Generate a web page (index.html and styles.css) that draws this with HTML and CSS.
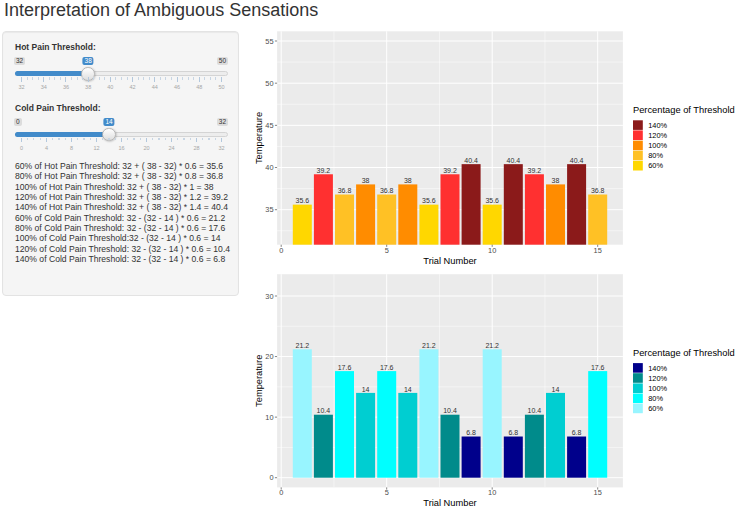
FILE: index.html
```html
<!DOCTYPE html>
<html lang="en">
<head>
<meta charset="utf-8">
<title>Interpretation of Ambiguous Sensations</title>
<link rel="stylesheet" href="styles.css">
</head>
<body>
<h1 class="page-title">Interpretation of Ambiguous Sensations</h1>
<div class="layout">
  <aside class="well">
    <div class="slider-group">
      <label class="control-label">Hot Pain Threshold:</label>
      <div class="irs">
        <span class="irs-line"></span>
        <span class="irs-min">32</span>
        <span class="irs-max">50</span>
        <div class="irs-range">
          <span class="irs-bar" style="width: calc(33.333% + 6.5px)"></span>
          <span class="irs-single" style="left: 33.333%">38</span>
          <span class="irs-handle" style="left: 33.333%"></span>
          <div class="irs-grid irs-grid-hot">
            <span class="grid-minor"></span>
            <div class="grid-ticks">
              <span class="tick"><span class="tick-text">32</span></span>
              <span class="tick"><span class="tick-text">34</span></span>
              <span class="tick"><span class="tick-text">36</span></span>
              <span class="tick"><span class="tick-text">38</span></span>
              <span class="tick"><span class="tick-text">40</span></span>
              <span class="tick"><span class="tick-text">42</span></span>
              <span class="tick"><span class="tick-text">44</span></span>
              <span class="tick"><span class="tick-text">46</span></span>
              <span class="tick"><span class="tick-text">48</span></span>
              <span class="tick"><span class="tick-text">50</span></span>
            </div>
          </div>
        </div>
      </div>
    </div>
    <div class="slider-group">
      <label class="control-label">Cold Pain Threshold:</label>
      <div class="irs">
        <span class="irs-line"></span>
        <span class="irs-min">0</span>
        <span class="irs-max">32</span>
        <div class="irs-range">
          <span class="irs-bar" style="width: calc(43.75% + 6.5px)"></span>
          <span class="irs-single" style="left: 43.75%">14</span>
          <span class="irs-handle" style="left: 43.75%"></span>
          <div class="irs-grid irs-grid-cold">
            <span class="grid-minor"></span>
            <div class="grid-ticks">
              <span class="tick"><span class="tick-text">0</span></span>
              <span class="tick"><span class="tick-text">4</span></span>
              <span class="tick"><span class="tick-text">8</span></span>
              <span class="tick"><span class="tick-text">12</span></span>
              <span class="tick"><span class="tick-text">16</span></span>
              <span class="tick"><span class="tick-text">20</span></span>
              <span class="tick"><span class="tick-text">24</span></span>
              <span class="tick"><span class="tick-text">28</span></span>
              <span class="tick"><span class="tick-text">32</span></span>
            </div>
          </div>
        </div>
      </div>
    </div>
    <div class="formulas">
      <div>60% of Hot Pain Threshold: 32 + ( 38 - 32) * 0.6 = 35.6</div>
      <div>80% of Hot Pain Threshold: 32 + ( 38 - 32) * 0.8 = 36.8</div>
      <div>100% of Hot Pain Threshold: 32 + ( 38 - 32) * 1 = 38</div>
      <div>120% of Hot Pain Threshold: 32 + ( 38 - 32) * 1.2 = 39.2</div>
      <div>140% of Hot Pain Threshold: 32 + ( 38 - 32) * 1.4 = 40.4</div>
      <div>60% of Cold Pain Threshold: 32 - (32 - 14 ) * 0.6 = 21.2</div>
      <div>80% of Cold Pain Threshold: 32 - (32 - 14 ) * 0.6 = 17.6</div>
      <div>100% of Cold Pain Threshold:32 - (32 - 14 ) * 0.6 = 14</div>
      <div>120% of Cold Pain Threshold: 32 - (32 - 14 ) * 0.6 = 10.4</div>
      <div>140% of Cold Pain Threshold: 32 - (32 - 14 ) * 0.6 = 6.8</div>
    </div>
  </aside>

  <main class="plots">
    <!-- Hot thresholds per trial -->
    <svg class="plot" width="493" height="240" viewBox="245 28 493 240">
      <rect class="panel" x="277.1" y="31.3" width="345.8" height="213.4"/>
      <g class="grid-minor-lines">
        <line x1="277.1" x2="622.9" y1="230.79" y2="230.79"/>
        <line x1="277.1" x2="622.9" y1="188.61" y2="188.61"/>
        <line x1="277.1" x2="622.9" y1="146.44" y2="146.44"/>
        <line x1="277.1" x2="622.9" y1="104.26" y2="104.26"/>
        <line x1="277.1" x2="622.9" y1="62.09" y2="62.09"/>
        <line x1="333.95" x2="333.95" y1="31.3" y2="244.7"/>
        <line x1="439.45" x2="439.45" y1="31.3" y2="244.7"/>
        <line x1="544.95" x2="544.95" y1="31.3" y2="244.7"/>
      </g>
      <g class="grid-major-lines">
        <line x1="277.1" x2="622.9" y1="209.7" y2="209.7"/>
        <line x1="277.1" x2="622.9" y1="167.53" y2="167.53"/>
        <line x1="277.1" x2="622.9" y1="125.35" y2="125.35"/>
        <line x1="277.1" x2="622.9" y1="83.18" y2="83.18"/>
        <line x1="277.1" x2="622.9" y1="41" y2="41"/>
        <line x1="281.2" x2="281.2" y1="31.3" y2="244.7"/>
        <line x1="386.7" x2="386.7" y1="31.3" y2="244.7"/>
        <line x1="492.2" x2="492.2" y1="31.3" y2="244.7"/>
        <line x1="597.7" x2="597.7" y1="31.3" y2="244.7"/>
      </g>
      <g class="bars">
        <rect fill="#FFD700" x="292.8" y="204.64" width="19" height="40.06"/>
        <rect fill="#FF3030" x="313.9" y="174.27" width="19" height="70.43"/>
        <rect fill="#FFC125" x="335.0" y="194.52" width="19" height="50.18"/>
        <rect fill="#FF8C00" x="356.1" y="184.4" width="19" height="60.3"/>
        <rect fill="#FFC125" x="377.2" y="194.52" width="19" height="50.18"/>
        <rect fill="#FF8C00" x="398.3" y="184.4" width="19" height="60.3"/>
        <rect fill="#FFD700" x="419.4" y="204.64" width="19" height="40.06"/>
        <rect fill="#FF3030" x="440.5" y="174.27" width="19" height="70.43"/>
        <rect fill="#8B1A1A" x="461.6" y="164.15" width="19" height="80.55"/>
        <rect fill="#FFD700" x="482.7" y="204.64" width="19" height="40.06"/>
        <rect fill="#8B1A1A" x="503.8" y="164.15" width="19" height="80.55"/>
        <rect fill="#FF3030" x="524.9" y="174.27" width="19" height="70.43"/>
        <rect fill="#FF8C00" x="546.0" y="184.4" width="19" height="60.3"/>
        <rect fill="#8B1A1A" x="567.1" y="164.15" width="19" height="80.55"/>
        <rect fill="#FFC125" x="588.2" y="194.52" width="19" height="50.18"/>
      </g>
      <g class="bar-labels">
        <text x="302.3" y="203.3">35.6</text>
        <text x="323.4" y="172.9">39.2</text>
        <text x="344.5" y="193.2">36.8</text>
        <text x="365.6" y="183.1">38</text>
        <text x="386.7" y="193.2">36.8</text>
        <text x="407.8" y="183.1">38</text>
        <text x="428.9" y="203.3">35.6</text>
        <text x="450.0" y="172.9">39.2</text>
        <text x="471.1" y="162.8">40.4</text>
        <text x="492.2" y="203.3">35.6</text>
        <text x="513.3" y="162.8">40.4</text>
        <text x="534.4" y="172.9">39.2</text>
        <text x="555.5" y="183.1">38</text>
        <text x="576.6" y="162.8">40.4</text>
        <text x="597.7" y="193.2">36.8</text>
      </g>
      <g class="ticks">
        <line x1="274.9" x2="277.1" y1="209.7" y2="209.7"/>
        <line x1="274.9" x2="277.1" y1="167.53" y2="167.53"/>
        <line x1="274.9" x2="277.1" y1="125.35" y2="125.35"/>
        <line x1="274.9" x2="277.1" y1="83.18" y2="83.18"/>
        <line x1="274.9" x2="277.1" y1="41" y2="41"/>
        <line x1="281.2" x2="281.2" y1="244.7" y2="246.9"/>
        <line x1="386.7" x2="386.7" y1="244.7" y2="246.9"/>
        <line x1="492.2" x2="492.2" y1="244.7" y2="246.9"/>
        <line x1="597.7" x2="597.7" y1="244.7" y2="246.9"/>
      </g>
      <g class="axis-y-text">
        <text x="273.6" y="212.3">35</text>
        <text x="273.6" y="170.1">40</text>
        <text x="273.6" y="128">45</text>
        <text x="273.6" y="85.8">50</text>
        <text x="273.6" y="43.6">55</text>
      </g>
      <g class="axis-x-text">
        <text x="281.2" y="252.7">0</text>
        <text x="386.7" y="252.7">5</text>
        <text x="492.2" y="252.7">10</text>
        <text x="597.7" y="252.7">15</text>
      </g>
      <text class="axis-title" x="450" y="263.5">Trial Number</text>
      <text class="axis-title" transform="translate(261.8 138) rotate(-90)">Temperature</text>
      <g class="legend">
        <text class="legend-title" x="633" y="112.7">Percentage of Threshold</text>
        <rect fill="#8B1A1A" x="633" y="120.3" width="9.8" height="9.6"/>
        <rect fill="#FF3030" x="633" y="130.4" width="9.8" height="9.6"/>
        <rect fill="#FF8C00" x="633" y="140.6" width="9.8" height="9.6"/>
        <rect fill="#FFC125" x="633" y="150.7" width="9.8" height="9.6"/>
        <rect fill="#FFD700" x="633" y="160.9" width="9.8" height="9.6"/>
        <text x="648.2" y="127.7">140%</text>
        <text x="648.2" y="137.8">120%</text>
        <text x="648.2" y="148">100%</text>
        <text x="648.2" y="158.1">80%</text>
        <text x="648.2" y="168.2">60%</text>
      </g>
    </svg>

    <!-- Cold thresholds per trial -->
    <svg class="plot" width="493" height="241" viewBox="245 268 493 241">
      <rect class="panel" x="277.1" y="274.2" width="345.8" height="213.2"/>
      <g class="grid-minor-lines">
        <line x1="277.1" x2="622.9" y1="447.42" y2="447.42"/>
        <line x1="277.1" x2="622.9" y1="386.85" y2="386.85"/>
        <line x1="277.1" x2="622.9" y1="326.28" y2="326.28"/>
        <line x1="333.95" x2="333.95" y1="274.2" y2="487.4"/>
        <line x1="439.45" x2="439.45" y1="274.2" y2="487.4"/>
        <line x1="544.95" x2="544.95" y1="274.2" y2="487.4"/>
      </g>
      <g class="grid-major-lines">
        <line x1="277.1" x2="622.9" y1="477.7" y2="477.7"/>
        <line x1="277.1" x2="622.9" y1="417.13" y2="417.13"/>
        <line x1="277.1" x2="622.9" y1="356.56" y2="356.56"/>
        <line x1="277.1" x2="622.9" y1="295.99" y2="295.99"/>
        <line x1="281.2" x2="281.2" y1="274.2" y2="487.4"/>
        <line x1="386.7" x2="386.7" y1="274.2" y2="487.4"/>
        <line x1="492.2" x2="492.2" y1="274.2" y2="487.4"/>
        <line x1="597.7" x2="597.7" y1="274.2" y2="487.4"/>
      </g>
      <g class="bars">
        <rect fill="#98F5FF" x="292.8" y="349.29" width="19" height="128.41"/>
        <rect fill="#008B8B" x="313.9" y="414.71" width="19" height="62.99"/>
        <rect fill="#00FFFF" x="335.0" y="371.1" width="19" height="106.6"/>
        <rect fill="#00CED1" x="356.1" y="392.9" width="19" height="84.8"/>
        <rect fill="#00FFFF" x="377.2" y="371.1" width="19" height="106.6"/>
        <rect fill="#00CED1" x="398.3" y="392.9" width="19" height="84.8"/>
        <rect fill="#98F5FF" x="419.4" y="349.29" width="19" height="128.41"/>
        <rect fill="#008B8B" x="440.5" y="414.71" width="19" height="62.99"/>
        <rect fill="#00008B" x="461.6" y="436.51" width="19" height="41.19"/>
        <rect fill="#98F5FF" x="482.7" y="349.29" width="19" height="128.41"/>
        <rect fill="#00008B" x="503.8" y="436.51" width="19" height="41.19"/>
        <rect fill="#008B8B" x="524.9" y="414.71" width="19" height="62.99"/>
        <rect fill="#00CED1" x="546.0" y="392.9" width="19" height="84.8"/>
        <rect fill="#00008B" x="567.1" y="436.51" width="19" height="41.19"/>
        <rect fill="#00FFFF" x="588.2" y="371.1" width="19" height="106.6"/>
      </g>
      <g class="bar-labels">
        <text x="302.3" y="348">21.2</text>
        <text x="323.4" y="413.4">10.4</text>
        <text x="344.5" y="369.8">17.6</text>
        <text x="365.6" y="391.6">14</text>
        <text x="386.7" y="369.8">17.6</text>
        <text x="407.8" y="391.6">14</text>
        <text x="428.9" y="348">21.2</text>
        <text x="450.0" y="413.4">10.4</text>
        <text x="471.1" y="435.2">6.8</text>
        <text x="492.2" y="348">21.2</text>
        <text x="513.3" y="435.2">6.8</text>
        <text x="534.4" y="413.4">10.4</text>
        <text x="555.5" y="391.6">14</text>
        <text x="576.6" y="435.2">6.8</text>
        <text x="597.7" y="369.8">17.6</text>
      </g>
      <g class="ticks">
        <line x1="274.9" x2="277.1" y1="477.7" y2="477.7"/>
        <line x1="274.9" x2="277.1" y1="417.13" y2="417.13"/>
        <line x1="274.9" x2="277.1" y1="356.56" y2="356.56"/>
        <line x1="274.9" x2="277.1" y1="295.99" y2="295.99"/>
        <line x1="281.2" x2="281.2" y1="487.4" y2="489.6"/>
        <line x1="386.7" x2="386.7" y1="487.4" y2="489.6"/>
        <line x1="492.2" x2="492.2" y1="487.4" y2="489.6"/>
        <line x1="597.7" x2="597.7" y1="487.4" y2="489.6"/>
      </g>
      <g class="axis-y-text">
        <text x="273.6" y="480.3">0</text>
        <text x="273.6" y="419.7">10</text>
        <text x="273.6" y="359.2">20</text>
        <text x="273.6" y="298.6">30</text>
      </g>
      <g class="axis-x-text">
        <text x="281.2" y="495.4">0</text>
        <text x="386.7" y="495.4">5</text>
        <text x="492.2" y="495.4">10</text>
        <text x="597.7" y="495.4">15</text>
      </g>
      <text class="axis-title" x="450" y="506.3">Trial Number</text>
      <text class="axis-title" transform="translate(261.8 380.8) rotate(-90)">Temperature</text>
      <g class="legend">
        <text class="legend-title" x="633" y="355.5">Percentage of Threshold</text>
        <rect fill="#00008B" x="633" y="363.1" width="9.8" height="9.6"/>
        <rect fill="#008B8B" x="633" y="373.2" width="9.8" height="9.6"/>
        <rect fill="#00CED1" x="633" y="383.4" width="9.8" height="9.6"/>
        <rect fill="#00FFFF" x="633" y="393.5" width="9.8" height="9.6"/>
        <rect fill="#98F5FF" x="633" y="403.6" width="9.8" height="9.6"/>
        <text x="648.2" y="370.5">140%</text>
        <text x="648.2" y="380.6">120%</text>
        <text x="648.2" y="390.8">100%</text>
        <text x="648.2" y="400.9">80%</text>
        <text x="648.2" y="411">60%</text>
      </g>
    </svg>
  </main>
</div>
</body>
</html>
```

FILE: styles.css
```css
html, body {
  margin: 0;
  padding: 0;
  background: #ffffff;
}

body {
  font-family: "Liberation Sans", Arial, Helvetica, sans-serif;
  color: #333333;
  width: 738px;
  height: 509px;
  overflow: hidden;
}

.page-title {
  margin: 0 0 8px 0;
  padding-left: 4px;
  font-size: 18px;
  line-height: 20px;
  font-weight: normal;
  color: #333333;
}

.layout {
  display: flex;
  align-items: flex-start;
}

/* Sidebar well */
.well {
  box-sizing: border-box;
  width: 237px;
  margin: 3px 0 0 2px;
  padding: 10.3px 10px 30.5px 12px;
  background: #f5f5f5;
  border: 1px solid #e3e3e3;
  border-radius: 4px;
  box-shadow: inset 0 1px 1px rgba(0, 0, 0, 0.05);
}

.slider-group + .slider-group {
  margin-top: 11.9px;
}

.control-label {
  display: block;
  font-size: 8.5px;
  line-height: 10px;
  font-weight: bold;
  color: #333333;
  margin-bottom: 5px;
}

/* Range slider */
.irs {
  position: relative;
  width: 213px;
  height: 33.5px;
}

.irs-line {
  position: absolute;
  left: 0;
  right: 0;
  top: 14.2px;
  height: 5px;
  box-sizing: border-box;
  background: #ededed;
  border: 1px solid #d4d4d4;
  border-radius: 3px;
}

.irs-min,
.irs-max,
.irs-single {
  position: absolute;
  top: 0;
  height: 8px;
  padding: 0 2px;
  font-size: 6.5px;
  line-height: 8px;
  border-radius: 2px;
  white-space: nowrap;
}

.irs-min,
.irs-max {
  background: rgba(0, 0, 0, 0.1);
  color: #333333;
}

.irs-min { left: -1px; }
.irs-max { right: 0; }

.irs-range {
  position: absolute;
  top: 0;
  bottom: 0;
  left: 6.5px;
  right: 6.5px;
}

.irs-bar {
  position: absolute;
  left: -6.5px;
  top: 14.2px;
  height: 5px;
  background: #428bca;
  border-radius: 3px 0 0 3px;
}

.irs-single {
  background: #428bca;
  color: #ffffff;
  transform: translateX(-50%);
}

.irs-handle {
  position: absolute;
  top: 9.9px;
  width: 13.6px;
  height: 13.6px;
  box-sizing: border-box;
  margin-left: -6.8px;
  border-radius: 50%;
  border: 1px solid #b4b4b4;
  background: linear-gradient(to bottom, #ffffff 0%, #dedede 100%);
  box-shadow: 0.5px 0.5px 2px rgba(0, 0, 0, 0.25);
}

.irs-grid {
  position: absolute;
  left: 0;
  right: 0;
  top: 20px;
  height: 13px;
}

.grid-minor {
  position: absolute;
  left: -0.5px;
  right: -0.5px;
  top: 0;
  height: 2.5px;
}

.irs-grid-hot .grid-minor {
  background: repeating-linear-gradient(to right, #c7d5e3 0 1px, transparent 1px 5.5556px);
}

.irs-grid-cold .grid-minor {
  background: repeating-linear-gradient(to right, #c7d5e3 0 1px, transparent 1px 6.25px);
}

.grid-ticks {
  display: flex;
  justify-content: space-between;
  height: 100%;
}

.tick {
  position: relative;
  width: 0;
  height: 100%;
}

.tick::before {
  content: "";
  position: absolute;
  left: -0.5px;
  top: 0;
  width: 1px;
  height: 4.5px;
  background: #b3c8dd;
}

.tick-text {
  position: absolute;
  top: 7px;
  left: 0;
  transform: translateX(-50%);
  font-size: 5.5px;
  line-height: 6px;
  color: #a6a6a6;
  white-space: nowrap;
}

/* Formula listing */
.formulas {
  margin-top: 10px;
  font-size: 8.6px;
  line-height: 10.3px;
  color: #333333;
  white-space: nowrap;
}

/* Plots */
.plots {
  display: flex;
  flex-direction: column;
  width: 493px;
  margin-left: 6px;
}

.plot {
  display: block;
  font-family: "Liberation Sans", Arial, Helvetica, sans-serif;
}

.panel {
  fill: #ebebeb;
}

.grid-minor-lines line {
  stroke: #ffffff;
  stroke-width: 0.5;
}

.grid-major-lines line {
  stroke: #ffffff;
  stroke-width: 1;
}

.bar-labels text {
  font-size: 7px;
  fill: #333333;
  text-anchor: middle;
}

.ticks line {
  stroke: #333333;
  stroke-width: 0.6;
}

.axis-y-text text {
  font-size: 7.4px;
  fill: #4d4d4d;
  text-anchor: end;
}

.axis-x-text text {
  font-size: 7.4px;
  fill: #4d4d4d;
  text-anchor: middle;
}

.axis-title {
  font-size: 9.3px;
  fill: #000000;
  text-anchor: middle;
}

.legend text {
  font-size: 7.4px;
  fill: #000000;
}

.legend .legend-title {
  font-size: 9.3px;
}
```
